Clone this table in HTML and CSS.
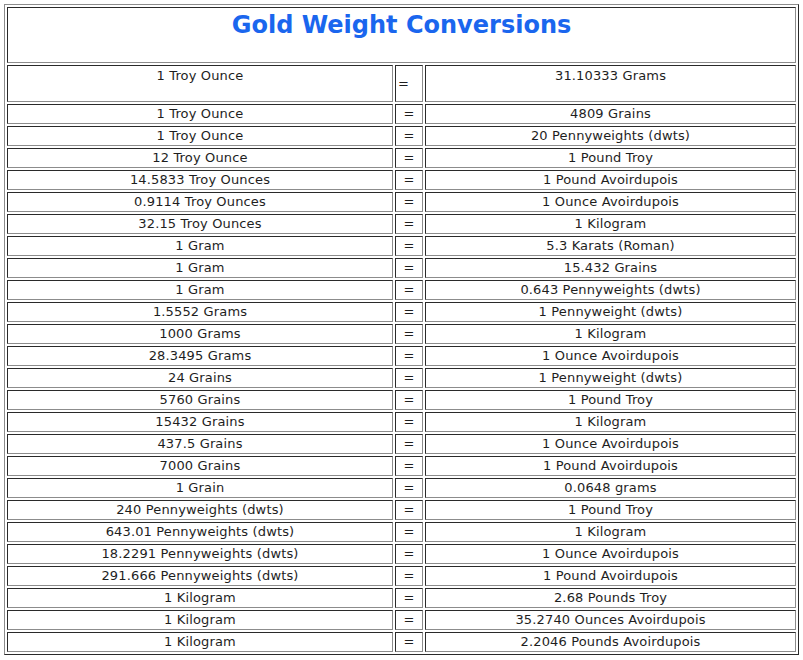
FILE: index.html
```html
<!DOCTYPE html>
<html>
<head>
<meta charset="utf-8">
<title>Gold Weight Conversions</title>
<link rel="stylesheet" href="styles.css">
</head>
<body>
<table class="conv">
  <colgroup><col class="c1"><col class="c2"><col class="c3"></colgroup>
  <tr class="title-row"><td colspan="3" class="title-cell"><h1 class="title">Gold Weight Conversions</h1></td></tr>
  <tr class="first-row"><td class="top">1 Troy Ounce</td><td class="eq-left">=</td><td class="top">31.10333 Grams</td></tr>
  <tr><td>1 Troy Ounce</td><td>=</td><td>4809 Grains</td></tr>
  <tr><td>1 Troy Ounce</td><td>=</td><td>20 Pennyweights (dwts)</td></tr>
  <tr><td>12 Troy Ounce</td><td>=</td><td>1 Pound Troy</td></tr>
  <tr><td>14.5833 Troy Ounces</td><td>=</td><td>1 Pound Avoirdupois</td></tr>
  <tr><td>0.9114 Troy Ounces</td><td>=</td><td>1 Ounce Avoirdupois</td></tr>
  <tr><td>32.15 Troy Ounces</td><td>=</td><td>1 Kilogram</td></tr>
  <tr><td>1 Gram</td><td>=</td><td>5.3 Karats (Roman)</td></tr>
  <tr><td>1 Gram</td><td>=</td><td>15.432 Grains</td></tr>
  <tr><td>1 Gram</td><td>=</td><td>0.643 Pennyweights (dwts)</td></tr>
  <tr><td>1.5552 Grams</td><td>=</td><td>1 Pennyweight (dwts)</td></tr>
  <tr><td>1000 Grams</td><td>=</td><td>1 Kilogram</td></tr>
  <tr><td>28.3495 Grams</td><td>=</td><td>1 Ounce Avoirdupois</td></tr>
  <tr><td>24 Grains</td><td>=</td><td>1 Pennyweight (dwts)</td></tr>
  <tr><td>5760 Grains</td><td>=</td><td>1 Pound Troy</td></tr>
  <tr><td>15432 Grains</td><td>=</td><td>1 Kilogram</td></tr>
  <tr><td>437.5 Grains</td><td>=</td><td>1 Ounce Avoirdupois</td></tr>
  <tr><td>7000 Grains</td><td>=</td><td>1 Pound Avoirdupois</td></tr>
  <tr><td>1 Grain</td><td>=</td><td>0.0648 grams</td></tr>
  <tr><td>240 Pennyweights (dwts)</td><td>=</td><td>1 Pound Troy</td></tr>
  <tr><td>643.01 Pennyweights (dwts)</td><td>=</td><td>1 Kilogram</td></tr>
  <tr><td>18.2291 Pennyweights (dwts)</td><td>=</td><td>1 Ounce Avoirdupois</td></tr>
  <tr><td>291.666 Pennyweights (dwts)</td><td>=</td><td>1 Pound Avoirdupois</td></tr>
  <tr><td>1 Kilogram</td><td>=</td><td>2.68 Pounds Troy</td></tr>
  <tr><td>1 Kilogram</td><td>=</td><td>35.2740 Ounces Avoirdupois</td></tr>
  <tr><td>1 Kilogram</td><td>=</td><td>2.2046 Pounds Avoirdupois</td></tr>
</table>
</body>
</html>
```

FILE: styles.css
```css
html, body {
  background: #ffffff;
}
body {
  margin: 4px;
  font-family: "DejaVu Sans", Verdana, sans-serif;
  font-size: 13px;
  letter-spacing: 0.15px;
  color: #1e1e1e;
}
.conv {
  border-collapse: separate;
  border-spacing: 2px;
  border: 1px solid;
  border-color: #8c8c8c #2a2a2a #2a2a2a #8c8c8c;
  width: 795px;
  table-layout: fixed;
}
.c1 { width: 386px; }
.c2 { width: 28px; }
.c3 { width: 371px; }
.conv td {
  border: 1px solid;
  border-color: #2a2a2a #8c8c8c #8c8c8c #2a2a2a;
  padding: 0 1px;
  height: 20px;
  box-sizing: border-box;
  text-align: center;
  vertical-align: middle;
  line-height: 16px;
}
.conv td.title-cell {
  height: 56px;
  vertical-align: top;
  padding: 0;
}
.title {
  margin: 2px 0 0 0;
  font-size: 24px;
  line-height: 30px;
  font-weight: bold;
  letter-spacing: 0;
  color: #1a66ee;
}
.first-row td { height: 37px; }
.conv td.top {
  vertical-align: top;
  padding-top: 2px;
}
.conv td.eq-left {
  text-align: left;
  padding-left: 2px;
}
```
